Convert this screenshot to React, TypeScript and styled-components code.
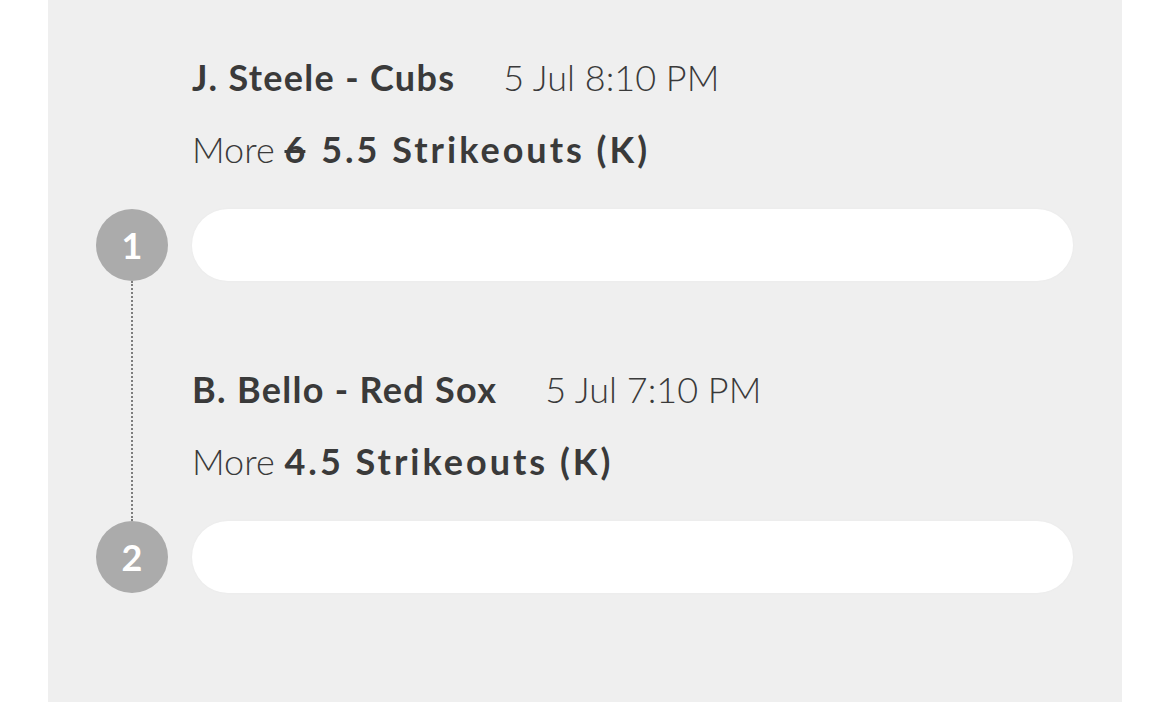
import React from 'react';
import styled, { createGlobalStyle } from 'styled-components';

const GlobalStyle = createGlobalStyle`
  html, body {
    margin: 0;
    padding: 0;
    background: #ffffff;
  }
  body {
    font-family: Lato, 'Noto Sans', sans-serif;
    color: #3a3a3a;
  }
`;

const Panel = styled.div`
  margin-left: 48px;
  width: 1074px;
  height: 702px;
  background: #efefef;
  overflow: hidden;
  box-sizing: border-box;
  padding: 0 49px 0 48px;
`;

const Leg = styled.div`
  display: grid;
  grid-template-columns: 72px 1fr;
  column-gap: 24px;
`;

const Rail = styled.div`
  display: flex;
  justify-content: center;
`;

const Connector = styled.div`
  width: 0;
  height: 100%;
  border-left: 2px dotted #7d7d7d;
`;

const Info = styled.div<{ $first?: boolean }>`
  padding-top: ${(p) => (p.$first ? '57px' : '88px')};
  padding-bottom: 40px;
`;

const TitleRow = styled.div`
  display: flex;
  align-items: center;
  gap: 48px;
  height: 40px;
  font-size: 36px;
  line-height: 40px;
  white-space: nowrap;
`;

const Player = styled.span`
  font-weight: 700;
  letter-spacing: 1.3px;
`;

const Kickoff = styled.span`
  font-weight: 300;
`;

const Market = styled.div`
  margin-top: 32px;
  height: 40px;
  font-size: 36px;
  line-height: 40px;
  font-weight: 300;
  white-space: nowrap;
`;

const Line = styled.span`
  font-weight: 700;
  letter-spacing: 3px;
`;

const OldLine = styled.s`
  font-weight: 700;
  text-decoration-thickness: 3px;
  margin-right: 6px;
`;

const Badge = styled.div`
  width: 72px;
  height: 72px;
  border-radius: 50%;
  background: #ababab;
  color: #ffffff;
  font-size: 36px;
  font-weight: 700;
  display: flex;
  align-items: center;
  justify-content: center;
`;

const Stake = styled.div`
  height: 72px;
  border-radius: 36px;
  background: #ffffff;
  box-shadow: 0 0 3px rgba(0, 0, 0, 0.03);
`;

type Pick = {
  player: string;
  time: string;
  oldLine?: string;
  line: string;
};

const picks: Pick[] = [
  { player: 'J. Steele - Cubs', time: '5 Jul 8:10 PM', oldLine: '6', line: '5.5 Strikeouts (K)' },
  { player: 'B. Bello - Red Sox', time: '5 Jul 7:10 PM', line: '4.5 Strikeouts (K)' },
];

const App = () => {
  return (
    <>
      <GlobalStyle />
      <Panel>
        {picks.map((pick, i) => (
          <Leg key={pick.player}>
            <Rail>{i > 0 && <Connector />}</Rail>
            <Info $first={i === 0}>
              <TitleRow>
                <Player>{pick.player}</Player>
                <Kickoff>{pick.time}</Kickoff>
              </TitleRow>
              <Market>
                More{' '}
                {pick.oldLine && (
                  <>
                    <OldLine>{pick.oldLine}</OldLine>{' '}
                  </>
                )}
                <Line>{pick.line}</Line>
              </Market>
            </Info>
            <Badge>{i + 1}</Badge>
            <Stake />
          </Leg>
        ))}
      </Panel>
    </>
  );
};

export default App;
